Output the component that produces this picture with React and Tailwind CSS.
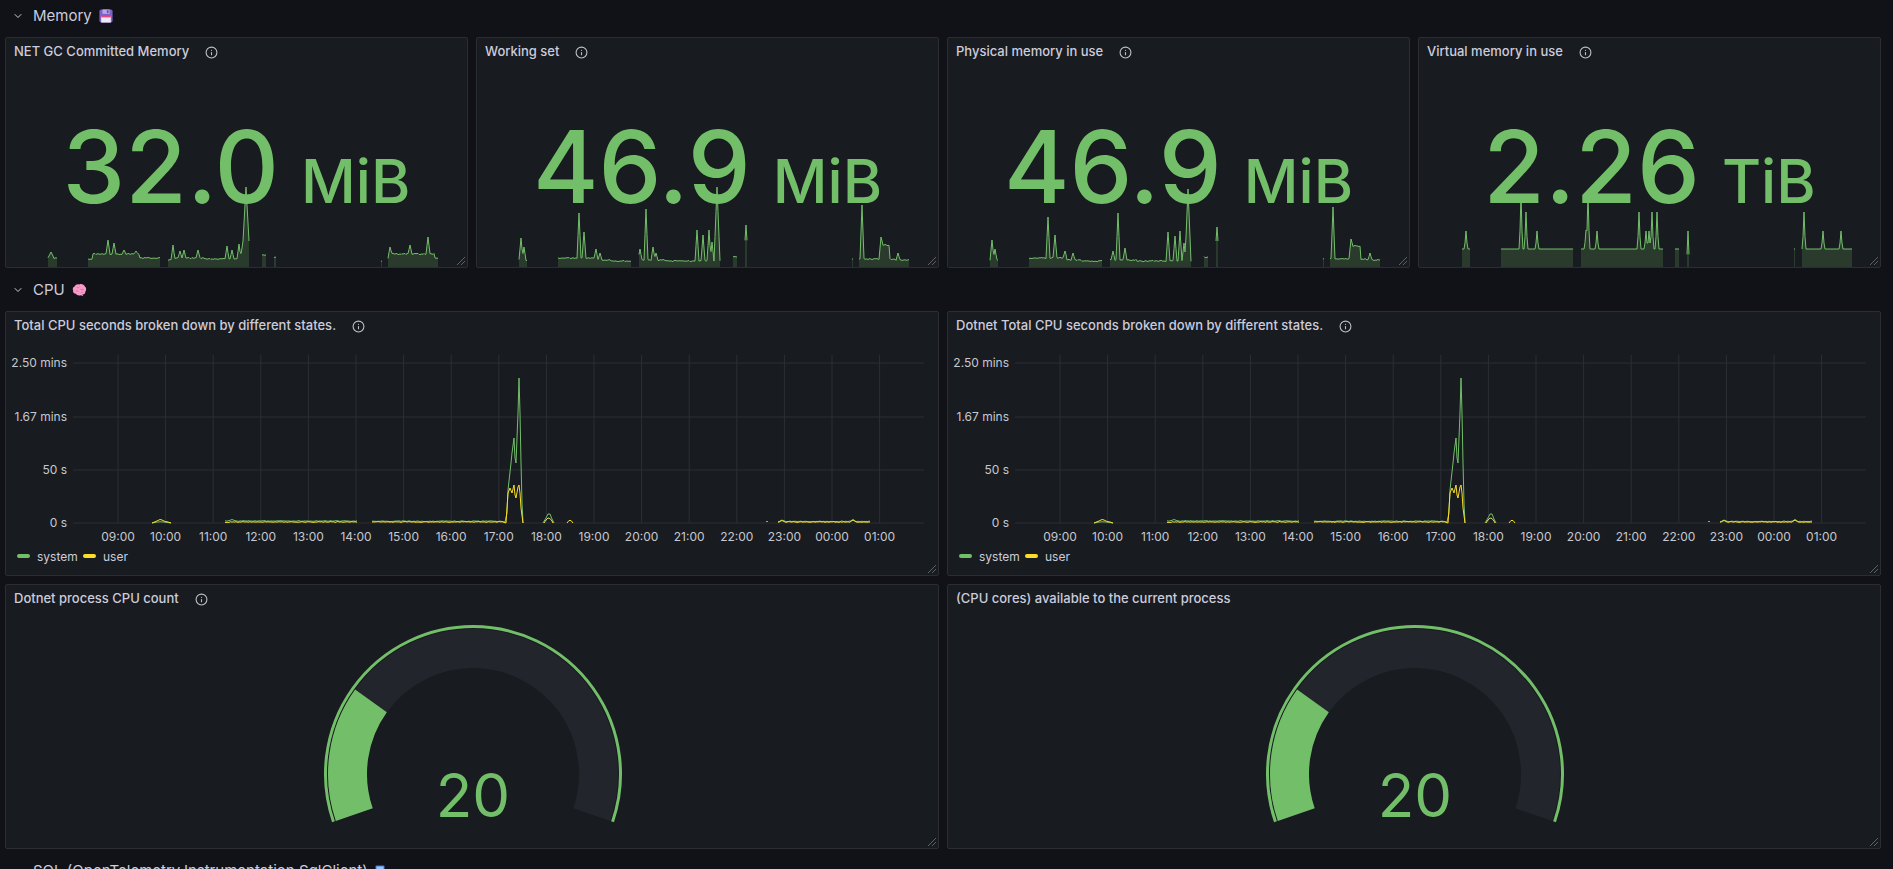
import { ChevronDown, Info } from 'lucide-react';

const GREEN = '#73bf69';
const YELLOW = '#fade2a';

// tiny seeded random so the lines look the same every render
const rng = (seed) => {
  let s = seed;
  return () => {
    s = (s * 9301 + 49297) % 233280;
    return s / 233280;
  };
};

// sparkline run: a base level (px from panel top) with spikes on it
const run = (x0, x1, base, spikes = [], seed = 1, jitter = 0.6) => {
  const r = rng(seed);
  const baseAt = (x) =>
    Array.isArray(base) ? base.reduce((b, [sx, sy]) => (x >= sx ? sy : b), base[0][1]) : base;
  const pts = [];
  for (let x = x0; x <= x1; x += 1) {
    let y = baseAt(x) + (r() - 0.5) * jitter * 2;
    spikes.forEach(([sx, top, w = 2]) => {
      const d = Math.abs(x - sx);
      if (d < w) y = Math.min(y, top + (baseAt(x) - top) * (d / w));
    });
    pts.push([x, y]);
  }
  return pts;
};

// timeseries run: height above the zero line
const flat = (x0, x1, h, seed, bumps = []) => {
  const r = rng(seed);
  const pts = [];
  for (let x = x0; x <= x1; x += 1) {
    let v = h + (r() - 0.5) * 0.8;
    bumps.forEach(([bx, bh, w]) => {
      const d = Math.abs(x - bx);
      if (d < w) v = Math.max(v, bh - (bh - h) * (d / w));
    });
    pts.push([x, v]);
  }
  return pts;
};

const linePath = (pts) => pts.map(([x, y], i) => `${i ? 'L' : 'M'}${x} ${y.toFixed(1)}`).join(' ');

const memRuns = [
  [
    run(43, 52, 221, [[46, 215, 3]], 3),
    run(83, 155, [[83, 222], [88, 217], [135, 221]], [[103, 203], [109, 206], [119, 213], [131, 214]], 5),
    run(163, 244, [[163, 223], [170, 221], [200, 222]], [[168, 208], [175, 214], [179, 213], [193, 213], [222, 209], [227, 213], [234, 207], [237, 211], [241, 150, 4]], 7),
    run(257, 261, 218, [], 9),
    run(269, 271, 220, [], 11),
    run(376, 377, 224, [], 13),
    run(383, 433, [[383, 221], [386, 217], [430, 221]], [[385, 210], [405, 208], [423, 200]], 15),
  ],
  [
    run(43, 51, 223, [[45, 201], [48, 210]], 21),
    run(82, 155, [[82, 221], [120, 223], [135, 224]], [[103, 176], [108, 195], [120, 212], [124, 216]], 23),
    run(163, 244, [[163, 223], [190, 224]], [[164, 212], [170, 172], [177, 210], [180, 216], [221, 193], [227, 198], [233, 193], [236, 205], [241, 150, 3]], 25),
    run(257, 261, 220, [], 27),
    run(269, 271, 211, [[270, 188, 1.5]], 29),
    run(376, 377, 222, [], 31),
    run(383, 433, [[383, 222], [405, 208], [414, 222], [420, 223]], [[386, 168], [405, 200], [422, 216]], 33),
  ],
  [
    run(43, 51, 223, [[45, 203], [48, 212]], 41),
    run(82, 155, [[82, 221], [120, 223], [135, 224]], [[101, 180], [108, 198], [118, 214], [126, 216]], 43),
    run(163, 244, [[163, 223], [190, 224]], [[166, 214], [171, 176], [178, 211], [221, 195], [228, 199], [233, 194], [237, 206], [241, 152, 3]], 45),
    run(257, 261, 220, [], 47),
    run(269, 271, 211, [[270, 190, 1.5]], 49),
    run(376, 377, 222, [], 51),
    run(383, 433, [[383, 222], [405, 209], [414, 222], [420, 223]], [[386, 170], [404, 202], [423, 216]], 53),
  ],
  [
    run(44, 52, 212, [[48, 194, 1.5]], 1, 0),
    run(83, 155, 212, [[103, 157, 1.5], [108, 175, 1.5], [119, 194, 1.5]], 1, 0),
    run(163, 245, 212, [[168, 193, 1.5], [170, 157, 1.5], [179, 194, 1.5], [221, 175, 1.5], [228, 194, 1.5], [231, 194, 1.5], [234, 175, 1.5], [239, 175, 1.5]], 1, 0),
    run(257, 261, 212, [], 1, 0),
    run(269, 271, 229, [[270, 194, 1.5]], 1, 0),
    run(376, 377, 212, [], 1, 0),
    run(384, 434, 212, [[386, 175, 1.5], [405, 194, 1.5], [423, 194, 1.5]], 1, 0),
  ],
];

const cpuGreen = [
  [[147, 0], [151, 0.8], [155, 1.2], [159, 1], [163, 0.5], [166, 0]],
  flat(220, 352, 2, 61, [[227, 3.5, 4]]),
  [
    ...flat(367, 497, 1.8, 63),
    [500, 1], [502, 10], [503, 33], [506, 60], [507, 70], [509, 85], [510, 65], [511, 60],
    [513, 110], [514, 145], [515, 110], [516, 60], [517, 20], [518, 0],
  ],
  [[538, 0], [541, 5], [543, 9], [545, 9], [547, 4], [549, 0]],
  [[761, 1.5], [763, 1.5]],
  flat(773, 865, 1.6, 65, [[777, 3, 3], [848, 3.5, 3]]),
];

const cpuYellow = [
  [[147, 0], [150, 1.2], [153, 2.5], [155, 3.5], [157, 3], [160, 1.5], [163, 1], [166, 0]],
  flat(220, 352, 1, 71),
  [
    ...flat(367, 497, 1, 73),
    [501, 0], [503, 30], [505, 35], [507, 30], [509, 38], [510, 28], [511, 25],
    [513, 36], [514, 38], [515, 30], [516, 15], [518, 0],
  ],
  [[539, 0], [541, 3], [543, 5], [545, 4.5], [547, 2], [548, 0]],
  [[562, 0], [564, 2.5], [566, 2.5], [568, 0]],
  flat(773, 865, 1, 75, [[777, 2.5, 3], [848, 3, 3]]),
];

const hours = ['09:00', '10:00', '11:00', '12:00', '13:00', '14:00', '15:00', '16:00', '17:00', '18:00', '19:00', '20:00', '21:00', '22:00', '23:00', '00:00', '01:00'];
const yTicks = [['2.50 mins', 52], ['1.67 mins', 106], ['50 s', 159], ['0 s', 212]];

const pt = (cx, cy, r, deg) => [cx + r * Math.cos((deg * Math.PI) / 180), cy - r * Math.sin((deg * Math.PI) / 180)];
const arc = (cx, cy, r, a0, a1) => {
  const [x0, y0] = pt(cx, cy, r, a0);
  const [x1, y1] = pt(cx, cy, r, a1);
  const large = a0 - a1 > 180 ? 1 : 0;
  return `M${x0.toFixed(2)} ${y0.toFixed(2)} A${r} ${r} 0 ${large} 1 ${x1.toFixed(2)} ${y1.toFixed(2)}`;
};

const Floppy = () => (
  <svg width="14" height="14" viewBox="0 0 16 16">
    <rect x="0.5" y="0.5" width="15" height="15" rx="2" fill="#7d63c7" />
    <rect x="4" y="0.5" width="8" height="5" fill="#b9a8ea" />
    <rect x="9" y="1.5" width="1.8" height="3" fill="#5a46a2" />
    <rect x="2.5" y="8" width="11" height="7.5" fill="#efe8fb" />
    <rect x="2.5" y="8" width="11" height="1.6" fill="#e7487e" />
  </svg>
);

const Brain = () => (
  <svg width="15" height="14" viewBox="0 0 16 15">
    <path d="M3 3.5C3.5 1.5 6 0.8 8 1.5C10 0.5 13 1.5 13.8 3.8C15.5 5 15.6 8 14.2 9.3C14.5 11.2 12.8 12.6 11 12.3L12.2 14.2L9.5 13C7.5 13.8 5 13.2 4.2 11.6C2 11.6 0.6 9.8 1.2 8C0.2 6.5 1 4.2 3 3.5Z" fill="#f59ac8" />
    <path d="M5 4.5C6 5.5 7.5 5 8 4M9 7C10.5 6.5 11.5 7.5 12.5 7M4 8.5C5 8 6.5 8.5 7 9.5M9.5 10.5C10 9.5 11.5 9.8 12 10.5" stroke="#d7649f" strokeWidth="0.8" fill="none" />
  </svg>
);

const BlueBox = () => (
  <svg width="10" height="13" viewBox="0 0 10 13">
    <rect x="0.5" y="0.5" width="9" height="12" rx="1" fill="#3a7be0" />
    <rect x="1.5" y="1.5" width="7" height="3" fill="#9cc3f7" />
  </svg>
);

const RowHeader = ({ title, icon, className = '' }) => (
  <div className={`flex h-[32px] items-center text-[15px] text-[#ccccdc] ${className}`}>
    <ChevronDown size={12} strokeWidth={2} className="ml-[7px]" />
    <span className="ml-[9px]">{title}</span>
    <span className="ml-[7px] flex items-center">{icon}</span>
  </div>
);

const ResizeHandle = () => (
  <svg width="10" height="10" viewBox="0 0 10 10" className="absolute bottom-[1px] right-[1px]">
    <path d="M1 9L9 1M5 9L9 5" stroke="#5d6067" strokeWidth="1" />
  </svg>
);

const Panel = ({ className = '', children }) => (
  <div className={`relative flex flex-col rounded-[2px] border border-[#2a2d33] bg-[#181b1f] ${className}`}>
    {children}
    <ResizeHandle />
  </div>
);

const PanelTitle = ({ title, info }) => (
  <div className="relative flex h-[28px] shrink-0 items-center pl-2 text-[13px] font-medium text-[#ccccdc]">
    <span>{title}</span>
    {info && <Info size={13} strokeWidth={2} className="ml-4 text-[#c0c0cc]" />}
  </div>
);

const Sparkline = ({ runs }) => (
  <svg width="461" height="229" viewBox="1 1 461 229" className="absolute inset-0">
    {runs.map((pts, i) => {
      const line = linePath(pts);
      const area = `${line} L${pts[pts.length - 1][0]} 230 L${pts[0][0]} 230 Z`;
      return (
        <g key={i}>
          <path d={area} fill="rgba(115,191,105,0.2)" />
          <path d={line} fill="none" stroke={GREEN} strokeWidth="1" strokeLinejoin="round" />
        </g>
      );
    })}
  </svg>
);

const StatPanel = ({ title, value, unit, runs }) => (
  <Panel className="h-[231px]">
    <Sparkline runs={runs} />
    <PanelTitle title={title} info />
    <div className="relative mt-[51px] flex items-baseline justify-center font-medium text-[#73bf69]">
      <span className="text-[100px] leading-none">{value}</span>
      <span className="ml-[22px] text-[60px] leading-none">{unit}</span>
    </div>
  </Panel>
);

const CpuPanel = ({ title }) => (
  <Panel className="h-[265px]">
    <PanelTitle title={title} info />
    <svg width="932" height="235" viewBox="1 29 932 235" className="block" fontFamily="Inter, sans-serif">
      {yTicks.map(([, y]) => (
        <line key={y} x1="68" x2="919" y1={y} y2={y} stroke="#2c2f35" strokeWidth="1" />
      ))}
      {hours.map((h, i) => {
        const x = 113 + 47.6 * i;
        return (
          <g key={h}>
            <line x1={x} x2={x} y1="44" y2="212" stroke="#2c2f35" strokeWidth="1" />
            <text x={x} y="229.5" textAnchor="middle" fontSize="12" fill="#c7c8d1">{h}</text>
          </g>
        );
      })}
      {yTicks.map(([label, y]) => (
        <text key={label} x="62" y={y + 4.3} textAnchor="end" fontSize="12" fill="#c7c8d1">{label}</text>
      ))}
      {cpuGreen.map((pts, i) => (
        <path key={`g${i}`} d={linePath(pts.map(([x, h]) => [x, 212 - h]))} fill="none" stroke={GREEN} strokeWidth="1" />
      ))}
      {cpuYellow.map((pts, i) => (
        <path key={`y${i}`} d={linePath(pts.map(([x, h]) => [x, 212 - h]))} fill="none" stroke={YELLOW} strokeWidth="1" />
      ))}
      <rect x="12" y="243" width="13" height="4" rx="2" fill={GREEN} />
      <text x="32" y="249.5" fontSize="12" fill="#ccccdc">system</text>
      <rect x="78" y="243" width="13" height="4" rx="2" fill={YELLOW} />
      <text x="98" y="249.5" fontSize="12" fill="#ccccdc">user</text>
    </svg>
  </Panel>
);

const GaugePanel = ({ title, info }) => {
  const cx = 468;
  const cy = 190;
  return (
    <Panel className="h-[265px]">
      <PanelTitle title={title} info={info} />
      <svg width="932" height="235" viewBox="1 29 932 235" className="block" fontFamily="Inter, sans-serif">
        <path d={arc(cx, cy, 125.5, 198.9, -18.9)} stroke="#22252b" strokeWidth="39" fill="none" />
        <path d={arc(cx, cy, 125.5, 198.9, 144.4)} stroke={GREEN} strokeWidth="39" fill="none" />
        <path d={arc(cx, cy, 147.5, 198.9, -18.9)} stroke={GREEN} strokeWidth="3" fill="none" />
        <text x={cx} y="233" textAnchor="middle" fontSize="60" fill={GREEN}>20</text>
      </svg>
    </Panel>
  );
};

const App = () => {
  return (
    <div className="h-[869px] w-full overflow-hidden bg-[#111217] pl-[5px] font-['Inter',sans-serif]">
      <div className="w-[1876px]">
        <RowHeader title="Memory" icon={<Floppy />} />
        <div className="mt-[5px] grid grid-cols-4 gap-2">
          <StatPanel title="NET GC Committed Memory" value="32.0" unit="MiB" runs={memRuns[0]} />
          <StatPanel title="Working set" value="46.9" unit="MiB" runs={memRuns[1]} />
          <StatPanel title="Physical memory in use" value="46.9" unit="MiB" runs={memRuns[2]} />
          <StatPanel title="Virtual memory in use" value="2.26" unit="TiB" runs={memRuns[3]} />
        </div>

        <RowHeader title="CPU" icon={<Brain />} className="mt-[6px]" />
        <div className="mt-[5px] grid grid-cols-2 gap-2">
          <CpuPanel title="Total CPU seconds broken down by different states." />
          <CpuPanel title="Dotnet Total CPU seconds broken down by different states." />
          <GaugePanel title="Dotnet process CPU count" info />
          <GaugePanel title="(CPU cores) available to the current process" />
        </div>

        <RowHeader title="SQL (OpenTelemetry.Instrumentation.SqlClient)" icon={<BlueBox />} className="mt-[6px]" />
      </div>
    </div>
  );
};

export default App;
